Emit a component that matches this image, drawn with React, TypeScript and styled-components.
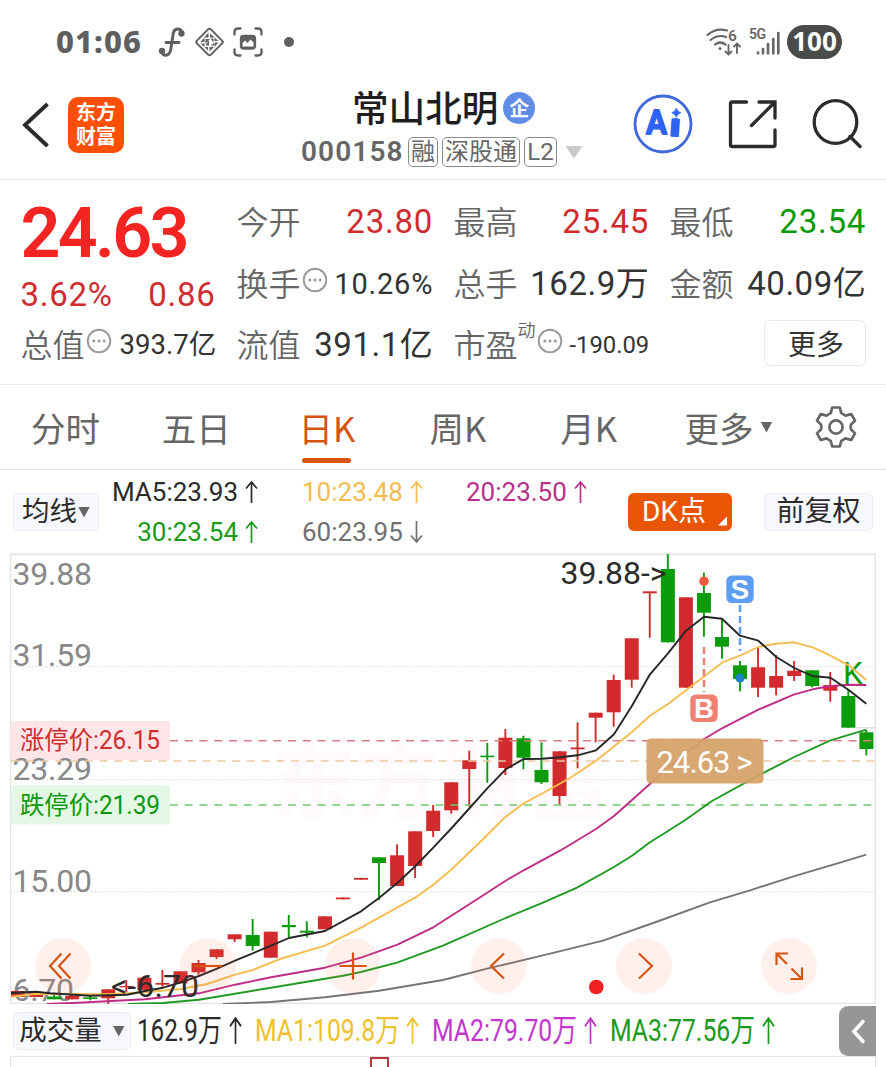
import React from "react";
import styled, { createGlobalStyle } from "styled-components";

const GlobalStyle = createGlobalStyle`
  * { box-sizing: border-box; }
  body {
    margin: 0;
    background: #fff;
    color: #2b2b2b;
    font-family: Roboto, "Noto Sans CJK SC", sans-serif;
    overflow: hidden;
  }
  svg { flex: none; }
`;

const RED = "#d02c2e";
const GREEN = "#0a990a";
const ORANGE = "#d65410";

const Screen = styled.div`
  width: 886px;
  height: 1067px;
  overflow: hidden;
  display: flex;
  flex-direction: column;
  background: #fff;
  > * {
    flex: none;
  }
`;

/* ---------- status bar ---------- */
const StatusBar = styled.header`
  height: 83px;
  padding: 0 44px 0 56px;
  display: flex;
  align-items: center;
  justify-content: space-between;
`;
const StatusGroup = styled.div<{ $gap: number }>`
  display: flex;
  align-items: center;
  gap: ${(p) => p.$gap}px;
`;
const Clock = styled.span`
  font: 800 31px/40px "Noto Sans", sans-serif;
  color: #5f5f5f;
  letter-spacing: 1.1px;
  width: 92px;
  margin-top: -2px;
`;
const Dot = styled.i`
  width: 10px;
  height: 10px;
  margin-left: 13px;
  border-radius: 50%;
  background: #5f5f5f;
`;
const Battery = styled.span`
  width: 55px;
  height: 34px;
  border-radius: 17px;
  background: #494b4a;
  color: #fff;
  font: 700 26px/33px "Noto Sans", sans-serif;
  text-align: center;
`;

/* ---------- title bar ---------- */
const TitleBar = styled.div`
  height: 97px;
  padding: 0 24px 0 22px;
  border-bottom: 1.5px solid #e4e4e4;
  display: grid;
  grid-template-columns: 279px 1fr 229px;
  align-items: start;
`;
const TitleLeft = styled.div`
  display: flex;
  align-items: center;
  gap: 19px;
  padding-top: 13.5px;
`;
const Logo = styled.div`
  width: 56px;
  height: 56px;
  border-radius: 10px;
  background: #ff4f02;
  color: #fff;
  font: 700 20px/24px "Noto Sans CJK SC", sans-serif;
  text-align: center;
  padding-top: 3px;
`;
const TitleCenter = styled.div`
  display: flex;
  flex-direction: column;
`;
const NameRow = styled.div`
  display: flex;
  align-items: center;
  height: 50px;
  padding-left: 51px;
  gap: 5px;
`;
const StockName = styled.h1`
  margin: -2px 0 0;
  font: 500 36.6px/50px "Noto Sans CJK SC", sans-serif;
  color: #1e1e1e;
`;
const CompanyBadge = styled.span`
  width: 32px;
  height: 32px;
  border-radius: 50%;
  background: #608ce6;
  color: #fff;
  font: 700 20px/31px "Noto Sans CJK SC", sans-serif;
  text-align: center;
`;
const CodeRow = styled.div`
  display: flex;
  align-items: center;
  height: 38px;
  gap: 4px;
`;
const Code = styled.span`
  font-weight: 600;
  font-size: 28px;
  line-height: 38px;
  letter-spacing: 1.1px;
  color: #666;
  width: 103px;
`;
const Tag = styled.span<{ $width: number }>`
  width: ${(p) => p.$width}px;
  height: 30px;
  border: 1.3px solid #8a8a8a;
  border-radius: 5px;
  font-size: 24px;
  line-height: 28px;
  color: #666;
  text-align: center;
  white-space: nowrap;
`;
const Triangle = styled.i<{ $w: number; $h: number; $color: string; $ml?: number }>`
  display: inline-block;
  width: ${(p) => p.$w}px;
  height: ${(p) => p.$h}px;
  margin-left: ${(p) => p.$ml || 0}px;
  background: ${(p) => p.$color};
  clip-path: polygon(0 0, 100% 0, 50% 100%);
  flex: none;
`;
const TitleActions = styled.div`
  display: flex;
  align-items: center;
  justify-content: space-between;
  padding-top: 11px;
`;

/* ---------- quote panel ---------- */
const Quote = styled.section`
  height: 205px;
  padding: 9.5px 20px 0 20.5px;
  border-bottom: 1.5px solid #ebebeb;
  display: grid;
  grid-template-columns: 195px 196px 195px 196px;
  column-gap: 21px;
`;
const Column = styled.div`
  display: flex;
  flex-direction: column;
`;
const Price = styled.div`
  height: 83px;
  font-weight: 600;
  font-size: 70px;
  line-height: 86px;
  letter-spacing: -2.7px;
  color: #f32422;
`;
const ChangeRow = styled.div`
  height: 40px;
  display: flex;
  justify-content: space-between;
  font-size: 33px;
  line-height: 44px;
  letter-spacing: 0.7px;
  color: ${RED};
`;
const Cell = styled.div`
  height: 61.5px;
  display: flex;
  align-items: center;
  white-space: nowrap;
`;
const Label = styled.span`
  font: 350 32px/60px "Noto Sans CJK SC", sans-serif;
  color: #666;
`;
const Value = styled.span<{ $size?: number; $color?: string; $ls?: number }>`
  margin-left: auto;
  padding-top: 4px;
  font-size: ${(p) => p.$size || 33}px;
  letter-spacing: ${(p) => p.$ls ?? 0.8}px;
  margin-right: -0.7px;
  line-height: 56px;
  color: ${(p) => p.$color || "#333"};
`;
const Sup = styled.sup`
  font: 350 18px/20px "Noto Sans CJK SC", sans-serif;
  color: #666;
  align-self: flex-start;
  margin-top: 6px;
`;
const MoreButton = styled.button`
  margin-left: auto;
  margin-right: -0.5px;
  width: 102px;
  height: 46px;
  padding: 0 0 0 2px;
  border: 1.5px solid #ebe9e9;
  border-radius: 6px;
  background: #fff;
  color: #333;
  font: 400 28px/40px "Noto Sans CJK SC", sans-serif;
`;

/* ---------- period tabs ---------- */
const Tabs = styled.nav`
  height: 85px;
  border-bottom: 1.5px solid #dfdfdf;
  display: flex;
`;
const Tab = styled.div<{ $active?: boolean; $width?: number }>`
  position: relative;
  width: ${(p) => p.$width || 130.8}px;
  height: 84px;
  display: flex;
  align-items: center;
  justify-content: center;
  font: 400 34.5px/84px "Noto Sans CJK SC", sans-serif;
  color: ${(p) => (p.$active ? ORANGE : "#666")};
  &::after {
    content: "";
    display: ${(p) => (p.$active ? "block" : "none")};
    position: absolute;
    left: 40.5px;
    bottom: 6px;
    width: 49px;
    height: 5px;
    border-radius: 3px;
    background: ${ORANGE};
  }
`;

/* ---------- moving average bar ---------- */
const AverageBar = styled.section`
  height: 83px;
  padding: 0 13px;
  display: flex;
  align-items: center;
`;
const Chip = styled.button<{ $w: number; $solid?: boolean; $size?: number; $pr?: number; $push?: boolean }>`
  position: relative;
  flex: none;
  width: ${(p) => p.$w}px;
  height: 38px;
  padding: 1px ${(p) => p.$pr || 0}px 0 0;
  margin-left: ${(p) => (p.$push ? "auto" : 0)};
  border: ${(p) => (p.$solid ? "0" : "1.5px solid #ebecf2")};
  border-radius: 6px;
  background: ${(p) => (p.$solid ? "#e95504" : "#f7f8fd")};
  color: ${(p) => (p.$solid ? "#fff" : "#2b2b2b")};
  font-family: Roboto, "Noto Sans CJK SC", sans-serif;
  font-size: ${(p) => p.$size || 28}px;
  line-height: 34px;
  display: flex;
  align-items: center;
  justify-content: center;
  gap: 1px;
  white-space: nowrap;
`;
const Corner = styled.i`
  position: absolute;
  right: 5px;
  bottom: 5px;
  width: 9px;
  height: 9px;
  background: #fff;
  clip-path: polygon(100% 0, 100% 100%, 0 100%);
`;
const Legend = styled.div`
  flex: none;
  display: grid;
  grid-template-columns: 151px 164px 165px;
  grid-template-rows: 40px 40px;
  margin: 0 0 0 10px;
  width: 519px;
`;
const LegendItem = styled.span<{ $color: string; $right?: boolean }>`
  display: flex;
  align-items: center;
  justify-content: ${(p) => (p.$right ? "flex-end" : "flex-start")};
  gap: 7px;
  padding-left: ${(p) => (p.$right ? 0 : 42)}px;
  padding-right: ${(p) => (p.$right ? 2 : 0)}px;
  font-size: 26px;
  line-height: 40px;
  color: ${(p) => p.$color};
  white-space: nowrap;
`;

/* ---------- candlestick chart ---------- */
const ChartArea = styled.section`
  position: relative;
  height: 451px;
  padding-left: 10px;
`;
const FloatingTools = styled.div`
  position: absolute;
  left: 35px;
  bottom: 10px;
  display: flex;
  gap: 89.2px;
`;
const RoundTool = styled.button`
  width: 56px;
  height: 56px;
  padding: 0;
  border: 0;
  border-radius: 50%;
  background: rgba(255, 110, 70, 0.1);
  display: block;
`;

/* ---------- volume ---------- */
const VolumeBar = styled.section`
  position: relative;
  height: 52px;
  padding: 1px 0 0 13px;
  display: flex;
  align-items: center;
`;
const VolumeText = styled.span<{ $w: number; $ml: number; $color: string }>`
  width: ${(p) => p.$w}px;
  margin-left: ${(p) => p.$ml}px;
  color: ${(p) => p.$color};
  font-size: 31px;
  line-height: 48px;
  white-space: nowrap;
  display: flex;
  align-items: center;
  justify-content: space-between;
`;
const Narrow = styled.span<{ $scale: number }>`
  width: 0;
  padding-top: 1px;
  transform: scaleX(${(p) => p.$scale});
  transform-origin: 0 50%;
`;
const Drawer = styled.div`
  position: absolute;
  right: 10px;
  top: 1.5px;
  width: 37px;
  height: 50px;
  border-radius: 9px 0 0 9px;
  background: #969696;
`;
const VolumePane = styled.section`
  height: 20px;
  margin: 0 10px;
  border: 1.5px solid #e4e4e4;
  border-bottom: 0;
  display: flex;
`;
const VolumeCandle = styled.i`
  width: 19px;
  height: 20px;
  margin-left: 358.5px;
  border: 2px solid #b5383d;
`;

const Arrow = ({ down, h = 22, w = 13 }: { down?: boolean; h?: number; w?: number }) => (
  <svg width={w} height={h} viewBox="0 0 13 22" preserveAspectRatio="none" fill="none" stroke="currentColor" strokeWidth="1.7">
    <path d={down ? "M6.5 0V21M1 14.5L6.5 21L12 14.5" : "M6.5 22V1M1 7.5L6.5 1L12 7.5"} />
  </svg>
);

const EllipsisIcon = styled.svg`
  width: 28px;
  height: 28px;
  margin-top: -4px;
`;
const Ellipsis = () => (
  <EllipsisIcon viewBox="0 0 28 28">
    <circle cx="14" cy="14" r="11.3" fill="none" stroke="#999" strokeWidth="1.9" />
    <circle cx="8.8" cy="14" r="1.5" fill="#999" />
    <circle cx="14" cy="14" r="1.5" fill="#999" />
    <circle cx="19.2" cy="14" r="1.5" fill="#999" />
  </EllipsisIcon>
);

type Candle = [number, number, number, number, 0 | 1];
/* high, body top, body bottom, low, rising; newest first */
const candles: Candle[] = [
  [730, 732.3, 749, 755.5, 0],
  [690, 696, 727.7, 727.7, 0],
  [672, 685, 690.7, 701.7, 1],
  [670.3, 670.3, 686, 687.5, 0],
  [661, 670.7, 676, 681, 1],
  [655, 676, 687.7, 695.3, 1],
  [647.7, 667.3, 687.7, 697, 1],
  [661, 665.3, 679, 691.3, 0],
  [619.3, 637, 646.7, 658.7, 0],
  [572.7, 593, 612.7, 636.7, 0],
  [597.3, 597.3, 687.7, 687.7, 1],
  [554, 569, 642.3, 642.3, 0],
  [592, 591.3, 593.3, 637.7, 1],
  [638.3, 638.3, 679.7, 687.7, 1],
  [674.7, 680, 712.3, 726.7, 1],
  [712.7, 712.7, 717.7, 742.3, 1],
  [722.3, 747.5, 749.3, 768.3, 1],
  [751.3, 751.3, 796, 804.7, 1],
  [742.3, 770, 782.3, 784, 0],
  [735.7, 738.3, 757.7, 769.3, 0],
  [729, 737.7, 768, 775, 1],
  [743, 755.6, 757.2, 782.7, 0],
  [750.7, 760.3, 769, 806.7, 1],
  [782.3, 782.3, 810.3, 813.7, 1],
  [805, 810.7, 831, 837, 1],
  [831.3, 831.3, 866, 878, 1],
  [844.3, 855.3, 886, 886, 1],
  [857.3, 857.3, 863, 900, 0],
  [877.9, 877.9, 879.7, 879.7, 1],
  [897.5, 897.5, 899.3, 899.3, 1],
  [916.3, 916.3, 929.3, 929.3, 1],
  [921.3, 930.7, 932.7, 937.3, 0],
  [915, 925, 927.2, 937.3, 0],
  [931.7, 931.7, 957.7, 957.7, 1],
  [919, 935, 946, 950.7, 0],
  [934.3, 934.3, 939.3, 942, 1],
  [949.3, 949.3, 957, 959, 1],
  [960, 963, 972.3, 974.7, 1],
  [971.3, 971.3, 983.3, 983.3, 1],
  [970, 983, 984.7, 986.7, 1],
  [977.7, 977.7, 990, 990, 1],
  [980, 986, 987.3, 992.5, 1],
  [989.3, 989.3, 998.3, 1004, 1],
  [995.7, 997.3, 999, 1000.3, 0],
  [995, 996, 999.3, 999.3, 1],
  [995, 996.5, 999.3, 999.3, 0],
  [993, 993, 997, 997, 1],
  [991, 991, 997, 997, 1],
];

const ma5 =
  "11,993 36,991.7 50,993.3 90,995.7 127,994.7 145,991 163,987.7 181,982.3 199,976 217,968.7 235,960.7 271,945.7 289,938 325,931 361,911.3 379,898 397.5,882.7 415.5,866 433.3,847.7 451.7,828 469.7,808 487,788.7 505.7,769.3 523.7,759 542,758.7 560,757.3 577.5,755.3 596,750.3 614,734.3 632,705.7 650,674.3 668,653.3 686,630.7 704,616.7 722,618.7 740,635.7 758.3,640.7 776,656.7 794.3,668 812.7,676 830.5,677.7 848.7,690 866.3,703.7";
const ma10 =
  "11,996.7 37,993.7 108,994.3 145,992.3 181,989 207,984 235,974.7 253,970 280,959 325,945.7 361,927.7 415,897.7 433,885 451.7,869.3 483,839.3 505.7,816.7 523.7,803.3 543,793 570,778 596,760.7 632,732 650,715.7 668,704 722,662.7 740,655.7 758.3,647 776,643.7 794.3,642.3 812.7,647.3 830.5,655.7 848.7,665.3 866.3,680";
const ma20 =
  "47,1004 73,1003 145,999.3 199,993.3 235,984.7 271,977.3 325,967.7 361,957.7 397.5,944.7 433.3,927.3 469.7,904 505.7,880.7 523.7,870.3 560,850.7 596,829 614,816 632,800 668,767.7 704,739 722,728.3 758.3,709.7 794.3,694.3 812.7,689.3 830.5,686 848.7,684.7 866.3,685";
const ma30 =
  "128,1004 163,1003 199,999.7 235,993.7 271,987.7 307,981.7 343,975.7 361,972 397,962.7 443,945.7 505.7,918 543,902.7 577,887.7 614,867 632,855.7 650,842.3 668,831 686,819.5 712,801 760,774.7 794.3,757 830.5,740.3 866.3,729.7";
const ma60 =
  "223,1004 271,1002 325,997.3 379,990.7 443,980 491,967.7 546,954.7 603,940.7 656,922 710,902.3 750,890.3 796,875.7 840,862.7 866.3,854.7";

const candleX = (i: number) => 866.4 - 18.05 * i;

const AxisLabel = ({ y, text, length = 79.5 }: { y: number; text: string; length?: number }) => (
  <text x="12.5" y={y} fontSize="32" fill="#888" textLength={length}>
    {text}
  </text>
);

const Marker = ({ x, y, color, letter }: { x: number; y: number; color: string; letter: string }) => (
  <g>
    <rect x={x - 13.7} y={y - 13.7} width="27.4" height="27.4" rx="5.5" fill={color} />
    <text x={x} y={y + 9.8} textAnchor="middle" fontFamily="Liberation Sans" fontWeight="700" fontSize="27.5" fill="#fff">
      {letter}
    </text>
  </g>
);

const ChartSvg = styled.svg`
  display: block;
  font-family: Roboto, "Noto Sans CJK SC", sans-serif;
`;

const Chart = () => (
  <ChartSvg width="866" height="451" viewBox="10 553 866 451">
    <text x="272" y="812" fontSize="84" fontWeight="700" fill="#fdf9fc" textLength="338" fontFamily="Noto Sans CJK SC">
      东方财富
    </text>
    <path d="M10 554.3H876" stroke="#e8e8e8" strokeWidth="2" />
    <path d="M10.7 554V1003.4H875.3V554" fill="none" stroke="#e3e3e3" strokeWidth="1.3" />
    <g stroke="#d9d9d9" strokeWidth="1" strokeDasharray="1 2">
      <path d="M11 666.5H875M11 779.5H875M11 891.5H875" />
    </g>
    <path d="M856 727.7H875" stroke="#dcdce6" strokeWidth="1.5" />
    <rect x="11" y="721" width="159" height="39" rx="3" fill="#fee5e7" />
    <rect x="11" y="785.5" width="159" height="39" rx="3" fill="#e4f6e4" />
    <text x="20" y="748.8" fontSize="25" fill={RED} textLength="140" lengthAdjust="spacingAndGlyphs">
      涨停价:26.15
    </text>
    <text x="20" y="813.5" fontSize="25" fill={GREEN} textLength="140" lengthAdjust="spacingAndGlyphs">
      跌停价:21.39
    </text>
    <AxisLabel y={585} text="39.88" />
    <AxisLabel y={666.3} text="31.59" />
    <AxisLabel y={779.5} text="23.29" />
    <AxisLabel y={892} text="15.00" />
    <AxisLabel y={1001} text="6.70" length={61.5} />

    {candles.map(([high, top, bottom, low, up], i) => (
      <g key={i} fill={up ? "#d22b2d" : "#0a9c0a"}>
        <rect x={candleX(i) - 1} y={high} width="1.9" height={Math.max(low - high, 0)} />
        <rect x={candleX(i) - 7} y={top} width="14" height={bottom - top} />
      </g>
    ))}

    <g fill="none" strokeWidth="1.6" strokeDasharray="8 6.75">
      <path d="M170 740.7H875" stroke="#dc7c82" />
      <path d="M11 761H875" stroke="#ecc9a2" />
      <path d="M170 805H875" stroke="#6fcb6f" />
    </g>

    <text x="843" y="684" fontSize="31.5" fill={GREEN}>
      K
    </text>

    <g fill="none" strokeWidth="1.9" strokeLinejoin="round">
      <polyline points={ma60} stroke="#757575" />
      <polyline points={ma30} stroke="#1f9a22" />
      <polyline points={ma20} stroke="#bf2c86" />
      <polyline points={ma10} stroke="#f5bd4f" />
      <polyline points={ma5} stroke="#262626" />
    </g>

    <path d="M704 647V692" stroke="#f07f73" strokeWidth="2.6" strokeDasharray="7 4" />
    <path d="M740 605V651" stroke="#5e9ff2" strokeWidth="2.6" strokeDasharray="7 4" />
    <circle cx="704" cy="581.2" r="4.8" fill="#ee5a3e" />
    <circle cx="740" cy="678" r="4.6" fill="#1c82c8" />
    <Marker x={704} y={708.3} color="#f08172" letter="B" />
    <Marker x={740} y={589.3} color="#5d9ef3" letter="S" />

    <text x="560.5" y="583.5" fontSize="32" fill="#2b2b2b" textLength="106">
      {"39.88->"}
    </text>
    <text x="111" y="997" fontSize="32" fill="#2b2b2b" textLength="88">
      {"<-6.70"}
    </text>

    <rect x="646.5" y="738.5" width="117" height="45" rx="4.5" fill="#d5a167" fillOpacity="0.93" />
    <text x="656.5" y="772.5" fontSize="31" fill="#fff" textLength="96">
      {"24.63 >"}
    </text>
    <circle cx="596.3" cy="987" r="7.3" fill="#f01f22" />
  </ChartSvg>
);

/* glyphs of the floating buttons, each in a 56 x 56 box */
const toolPaths = [
  "M26.5 15.5L15 28L26.5 40.5M35.5 15.5L24 28L35.5 40.5",
  "M14 28H42",
  "M14.5 28H41.5M28 14.5V41.5",
  "M33 15.5L20 28L33 40.5",
  "M23 15.5L36 28L23 40.5",
  "M26 26L15.5 15.5M15.5 27V15.5H27M30.5 30.5L41 41M41 29.5V41H29.5",
];

const averages = [
  { text: "MA5:23.93", color: "#2b2b2b", right: true },
  { text: "10:23.48", color: "#f3bc4c" },
  { text: "20:23.50", color: "#b8308b" },
  { text: "30:23.54", color: "#1b9a1b", right: true },
  { text: "60:23.95", color: "#707070", down: true },
];

export default function App() {
  return (
    <Screen>
      <GlobalStyle />
      <StatusBar>
        <StatusGroup $gap={8}>
          <Clock>01:06</Clock>
          <svg width="30" height="32" viewBox="0 0 30 32" fill="none" stroke="#5f5f5f" strokeWidth="2.9" strokeLinecap="round">
            <path d="M26 7C25.5 2.5 19 1 17.3 7L14.8 23C13.8 30.5 6.5 31.5 5.5 25" />
            <path d="M10 16.5H23" />
            <circle cx="25.5" cy="7.5" r="1.7" fill="#5f5f5f" />
            <circle cx="6" cy="25" r="1.7" fill="#5f5f5f" />
          </svg>
          <svg width="31" height="32" viewBox="0 0 31 32" fill="none" stroke="#5f5f5f" strokeWidth="2">
            <rect x="5.6" y="6.1" width="19.8" height="19.8" rx="2" transform="rotate(45 15.5 16)" />
            <g fill="#5f5f5f" stroke="none">
              <path d="M14.5 6.5V11.5H10ZM16 7.5L20.5 11.5H16ZM6.5 16H10.5V11.5ZM6.5 17.5H10.5V21ZM24.5 15H20.5V11.5ZM24.5 16.5L20.5 21V16.5ZM15.5 25.5V21H20ZM14 24.5L10.5 21H14Z" />
              <path d="M11.5 13V18L16 13ZM15 14.5V19.5H11.5ZM16.5 12.5H19.5V16.5ZM16.5 19.5L20 17V19.5Z" />
            </g>
          </svg>
          <svg width="30" height="32" viewBox="0 0 30 32" fill="none" stroke="#5f5f5f" strokeWidth="2.3" strokeLinecap="round">
            <path d="M1.5 8.5V6Q1.5 2.5 5 2.5H7.5M22.5 2.5H25Q28.5 2.5 28.5 6V8.5M28.5 23.5V26Q28.5 29.5 25 29.5H22.5M7.5 29.5H5Q1.5 29.5 1.5 26V23.5" />
            <rect x="8" y="10" width="14" height="12.5" rx="2.5" fill="#5f5f5f" />
            <path d="M9.5 20.5V17L12 14.5L14.5 17L17.5 13.5L20.5 16.5V20.5Z" fill="#fff" stroke="none" />
          </svg>
          <Dot />
        </StatusGroup>
        <StatusGroup $gap={7}>
          <svg width="36" height="32" viewBox="0 0 36 32" fill="none" stroke="#666" strokeWidth="2.2" strokeLinecap="round">
            <path d="M1.5 9Q10 1.5 21 4.5M4.5 14Q12 8 20 11M9 18.5Q14 14.5 19.5 18.5" />
            <circle cx="14" cy="22.5" r="1.5" fill="#666" stroke="none" />
            <path d="M22.5 19V28M19.5 25.5L22.5 28.5L25.5 25.5M31 27V18M28 20.5L31 17.5L34 20.5" strokeWidth="1.9" />
            <text x="22" y="14.5" fontFamily="Roboto" fontWeight="600" fontSize="15.5" fill="#666" stroke="none">6</text>
          </svg>
          <svg width="31" height="32" viewBox="0 0 31 32" stroke="#666" strokeWidth="2.7" strokeLinecap="round">
            <path d="M9 26.5V27.3M14 23V27.3M19 18V27.3M24.3 13V27.3M29.3 7V27.3" />
            <text x="0" y="13" fontFamily="Roboto" fontWeight="600" fontSize="14" fill="#666" stroke="none" textLength="17">5G</text>
          </svg>
          <Battery>100</Battery>
        </StatusGroup>
      </StatusBar>

      <TitleBar>
        <TitleLeft>
          <svg width="27" height="46" viewBox="0 0 27 46" fill="none" stroke="#2b2b2b" strokeWidth="3.9">
            <path d="M25.5 2L3 23L25.5 44" />
          </svg>
          <Logo>
            东方
            <br />
            财富
          </Logo>
        </TitleLeft>
        <TitleCenter>
          <NameRow>
            <StockName>常山北明</StockName>
            <CompanyBadge>企</CompanyBadge>
          </NameRow>
          <CodeRow>
            <Code>000158</Code>
            <Tag $width={30}>融</Tag>
            <Tag $width={78}>深股通</Tag>
            <Tag $width={33}>L2</Tag>
            <Triangle $w={18} $h={13} $color="#c9c9c9" $ml={4} />
          </CodeRow>
        </TitleCenter>
        <TitleActions>
          <svg width="60" height="60" viewBox="0 0 60 60">
            <circle cx="30" cy="30" r="28" fill="#fff" stroke="#3f66dc" strokeWidth="2.8" />
            <g fontFamily="Lato" fontWeight="900" fill="#2f62f5" stroke="#2f62f5" strokeWidth="2" strokeLinejoin="round">
              <text x="13.5" y="40" fontSize="32" textLength="20" lengthAdjust="spacingAndGlyphs">
                A
              </text>
              <text x="36.5" y="42" fontSize="32" textLength="11" lengthAdjust="spacingAndGlyphs" transform="rotate(4 42 34)">
                i
              </text>
            </g>
            <rect x="37.5" y="13" width="11" height="11" fill="#fff" />
            <path d="M43.300 14.200Q44.300 17.700 47.800 18.700Q44.300 19.700 43.300 23.200Q42.300 19.700 38.800 18.700Q42.300 17.700 43.300 14.200Z" fill="#2f62f5" stroke="#2f62f5" strokeWidth="0.800" />
          </svg>
          <svg width="50" height="50" viewBox="0 0 50 50" fill="none" stroke="#2b2b2b" strokeWidth="3.3" strokeLinecap="round">
            <path d="M18.5 3H4Q2.5 3 2.5 4.5V46Q2.5 47.500 4 47.500H45.500Q47 47.500 47 46V31" />
            <path d="M31 3H47V19M46.500 3.500L23.500 26.500" />
          </svg>
          <svg width="50" height="50" viewBox="0 0 50 50" fill="none" stroke="#2b2b2b" strokeWidth="3.3" strokeLinecap="round">
            <circle cx="23.5" cy="23" r="21.3" />
            <path d="M38 37.5L48 47.5" />
          </svg>
        </TitleActions>
      </TitleBar>

      <Quote>
        <Column>
          <Price>24.63</Price>
          <ChangeRow>
            <span>3.62%</span>
            <span>0.86</span>
          </ChangeRow>
          <Cell>
            <Label>总值</Label>
            <Ellipsis />
            <Value $size={27.5} $ls={0}>393.7亿</Value>
          </Cell>
        </Column>
        <Column>
          <Cell>
            <Label>今开</Label>
            <Value $color={RED}>23.80</Value>
          </Cell>
          <Cell>
            <Label>换手</Label>
            <Ellipsis />
            <Value $size={29}>10.26%</Value>
          </Cell>
          <Cell>
            <Label>流值</Label>
            <Value $ls={0.5}>391.1亿</Value>
          </Cell>
        </Column>
        <Column>
          <Cell>
            <Label>最高</Label>
            <Value $color={RED}>25.45</Value>
          </Cell>
          <Cell>
            <Label>总手</Label>
            <Value $ls={0.5}>162.9万</Value>
          </Cell>
          <Cell>
            <Label>市盈</Label>
            <Sup>动</Sup>
            <Ellipsis />
            <Value $size={23.8} $ls={0}>-190.09</Value>
          </Cell>
        </Column>
        <Column>
          <Cell>
            <Label>最低</Label>
            <Value $color={GREEN}>23.54</Value>
          </Cell>
          <Cell>
            <Label>金额</Label>
            <Value $ls={0.5}>40.09亿</Value>
          </Cell>
          <Cell>
            <MoreButton>更多</MoreButton>
          </Cell>
        </Column>
      </Quote>

      <Tabs>
        <Tab>分时</Tab>
        <Tab>五日</Tab>
        <Tab $active>日K</Tab>
        <Tab>周K</Tab>
        <Tab>月K</Tab>
        <Tab $width={149}>
          更多
          <Triangle $w={12} $h={11} $color="#666" $ml={7} />
        </Tab>
        <Tab $width={66}>
          <svg width="44" height="44" viewBox="0 0 44 44" fill="none" stroke="#666" strokeWidth="2.7" strokeLinejoin="round">
            <path d="M18.2 2.5H25.8L27.3 8.2L31.5 10.6L37.2 9L41 15.6L36.8 19.7V24.3L41 28.4L37.2 35L31.5 33.4L27.3 35.8L25.8 41.5H18.2L16.7 35.8L12.5 33.4L6.8 35L3 28.4L7.2 24.3V19.7L3 15.6L6.8 9L12.5 10.6L16.7 8.2Z" />
            <circle cx="22" cy="22" r="6.6" />
          </svg>
        </Tab>
      </Tabs>

      <AverageBar>
        <Chip $w={86} $size={27.5}>
          均线
          <Triangle $w={12} $h={11} $color="#666" />
        </Chip>
        <Legend>
          {averages.map((a) => (
            <LegendItem key={a.text} $color={a.color} $right={a.right}>
              {a.text}
              <Arrow down={a.down} />
            </LegendItem>
          ))}
        </Legend>
        <Chip $w={104} $solid $size={28} $pr={12}>
          DK点
          <Corner />
        </Chip>
        <Chip $w={109} $push>
          前复权
        </Chip>
      </AverageBar>

      <ChartArea>
        <Chart />
        <FloatingTools>
          {toolPaths.map((d) => (
            <RoundTool key={d}>
              <svg width="56" height="56" viewBox="0 0 56 56" fill="none" stroke={ORANGE} strokeWidth="2.2">
                <path d={d} />
              </svg>
            </RoundTool>
          ))}
        </FloatingTools>
      </ChartArea>

      <VolumeBar>
        <Chip $w={118} $size={27.5}>
          成交量
          <Triangle $w={12} $h={11} $color="#666" $ml={10} />
        </Chip>
        <VolumeText $w={105} $ml={6} $color="#2b2b2b">
          <Narrow $scale={0.78}>162.9万</Narrow>
          <Arrow h={27} />
        </VolumeText>
        <VolumeText $w={164} $ml={13} $color="#eec22c">
          <Narrow $scale={0.8}>MA1:109.8万</Narrow>
          <Arrow h={27} />
        </VolumeText>
        <VolumeText $w={165} $ml={13} $color="#c238cc">
          <Narrow $scale={0.8}>MA2:79.70万</Narrow>
          <Arrow h={27} />
        </VolumeText>
        <VolumeText $w={165} $ml={13} $color="#1b9a1b">
          <Narrow $scale={0.8}>MA3:77.56万</Narrow>
          <Arrow h={27} />
        </VolumeText>
        <Drawer>
          <svg width="37" height="50" viewBox="0 0 37 50" fill="none" stroke="#fff" strokeWidth="3.6" strokeLinecap="round">
            <path d="M24 15.5L15 25.5L24 35.5" />
          </svg>
        </Drawer>
      </VolumeBar>
      <VolumePane>
        <VolumeCandle />
      </VolumePane>
    </Screen>
  );
}
